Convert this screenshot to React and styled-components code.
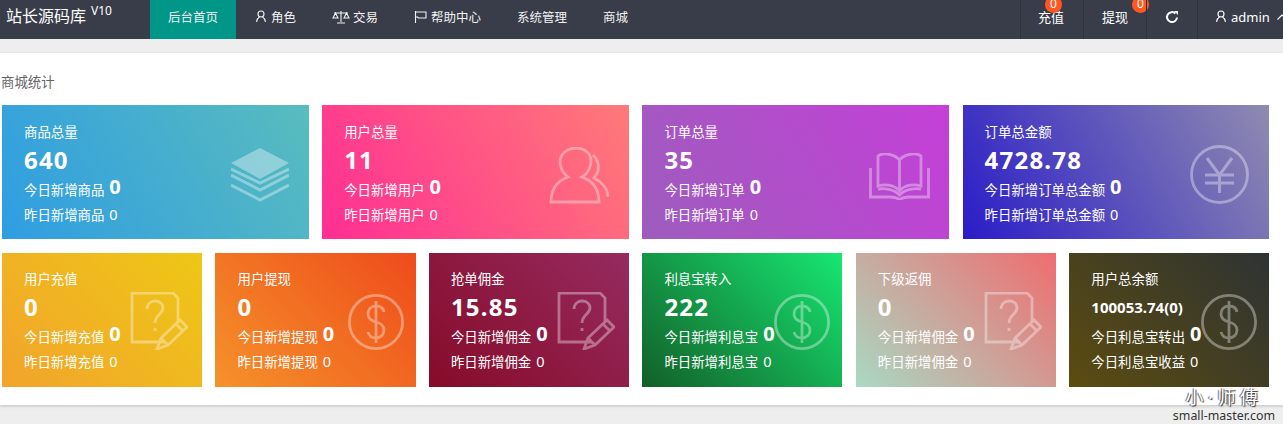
import React from 'react';
import styled, { createGlobalStyle } from 'styled-components';

const GlobalStyle = createGlobalStyle`
  html, body {
    margin: 0;
    height: 100%;
    overflow: hidden;
    background: #eeeeee;
    font-family: "Noto Sans", "Noto Sans CJK SC", sans-serif;
  }
  * { box-sizing: border-box; }
`;

// Top bar
const Header = styled.header`
  display: flex;
  height: 39px;
  background: #393d49;
  color: #fff;
  overflow: hidden;
`;

const Brand = styled.div`
  flex: none;
  width: 150px;
  padding-left: 6px;
  font-size: 16px;
  line-height: 32px;
  white-space: nowrap;
  sup {
    font-size: 12px;
    line-height: 12px;
    margin-left: 5px;
    vertical-align: 7px;
  }
`;

const Nav = styled.nav`
  display: flex;
  flex: 1;
`;

const NavItem = styled.a`
  display: flex;
  align-items: center;
  gap: ${(p) => p.$gap || 4}px;
  margin-right: ${(p) => (p.$active ? 1 : 0)}px;
  padding: 0 18px 6px;
  font-size: 12.5px;
  color: #f2f2f2;
  background: ${(p) => (p.$active ? '#009688' : 'transparent')};
  white-space: nowrap;
`;

const HeaderRight = styled.div`
  display: flex;
  flex: none;
  width: 263px;
  overflow: hidden;
`;

const RightItem = styled.div`
  position: relative;
  display: flex;
  flex: none;
  align-items: center;
  gap: 4px;
  width: ${(p) => p.$w}px;
  padding: 0 0 6px ${(p) => p.$pl}px;
  border-left: 1px solid #2f333e;
  font-size: 13px;
  color: #fff;
  white-space: nowrap;
  svg {
    flex: none;
  }
`;

const Badge = styled.span`
  position: absolute;
  top: -4px;
  left: ${(p) => p.$left}px;
  width: 17px;
  height: 17px;
  border-radius: 50%;
  background: #ff5722;
  font-size: 12px;
  line-height: 15px;
  text-align: center;
`;

const Gap = styled.div`
  height: 14px;
`;

// Main panel
const Panel = styled.main`
  height: 352px;
  background: #fff;
  box-shadow: 0 1px 3px rgba(0, 0, 0, 0.2);
  padding-top: 19px;
`;

const PanelTitle = styled.div`
  height: 33px;
  padding-left: 1px;
  font-size: 13.4px;
  line-height: 20px;
  color: #666;
`;

const CardRow = styled.div`
  display: grid;
  grid-template-columns: repeat(${(p) => p.$cols}, 1fr);
  gap: 13.4px;
  margin: 0 13.6px 14px 2px;
`;

const Card = styled.div`
  position: relative;
  height: 134px;
  padding: ${(p) => p.$pt}px 0 0 22px;
  color: #fff;
  background: linear-gradient(${(p) => p.$angle}deg, ${(p) => p.$from}, ${(p) => p.$to});
  overflow: hidden;
`;

const CardTitle = styled.div`
  font-size: 13.4px;
  line-height: 20px;
  white-space: nowrap;
`;

const CardValue = styled.div`
  margin-top: 2px;
  font-size: ${(p) => (p.$small ? 15 : 24)}px;
  font-weight: 700;
  line-height: 32px;
  letter-spacing: ${(p) => (p.$small ? 0 : 1.2)}px;
  white-space: nowrap;
`;

const CardLine = styled.div`
  display: flex;
  align-items: center;
  gap: 5px;
  height: 25px;
  font-size: 13.4px;
  white-space: nowrap;
  b {
    font-size: 20px;
    line-height: 20px;
    margin-top: -3px;
  }
  span {
    font-size: 14.5px;
  }
`;

const CardIcon = styled.svg`
  position: absolute;
  top: ${(p) => p.$top}px;
  right: ${(p) => p.$right}px;
  fill: none;
  stroke: #fff;
  stroke-width: 2.8;
  opacity: 0.36;
`;

const Watermark = styled.div`
  position: absolute;
  top: 386px;
  left: 1172px;
  width: 104px;
  text-align: center;
  color: #333;
  font-size: 12.4px;
  line-height: 16px;
  white-space: nowrap;
`;

const WatermarkName = styled.div`
  font-size: 18px;
  line-height: 22px;
  letter-spacing: 4.5px;
  color: #fff;
  text-shadow: 1px 1px 1px #333, -1px 0 1px #555;
`;

const ChevronSvg = styled.svg`
  margin-left: 3px;
  fill: none;
  stroke: currentColor;
  stroke-width: 1.1;
`;

const UserGlyph = () => (
  <svg width="12" height="13" viewBox="0 0 12 13" fill="none" stroke="currentColor" strokeWidth="1.1">
    <circle cx="6" cy="4" r="3" />
    <path d="M4.5 7C2.6 8 1.8 9.8 1.6 12M7.5 7C9.4 8 10.2 9.8 10.4 12" />
  </svg>
);

const ScaleGlyph = () => (
  <svg width="18" height="14" viewBox="0 0 18 14" fill="none" stroke="currentColor" strokeWidth="1.1">
    <path d="M9 1V12M5 13H13M2 3H16" />
    <path d="M1 8L3.5 3L6 8ZM12 8L14.5 3L17 8Z" />
  </svg>
);

const FlagGlyph = () => (
  <svg width="13" height="14" viewBox="0 0 13 14" fill="none" stroke="currentColor" strokeWidth="1.1">
    <path d="M1.5 1V13M1.5 2H12V8H4.5L3.5 7H1.5" />
  </svg>
);

const RefreshGlyph = () => (
  <svg width="14" height="14" viewBox="0 0 14 14" fill="none" stroke="currentColor" strokeWidth="2">
    <path d="M12 7.5A5 5 0 1 1 10.4 3.4" />
    <path d="M9 1L13 1L13 5Z" fill="currentColor" stroke="none" />
  </svg>
);

const ChevronGlyph = () => (
  <ChevronSvg width="10" height="6" viewBox="0 0 10 6">
    <path d="M0.5 5.5L5 1L9.5 5.5" />
  </ChevronSvg>
);

const LayersIcon = (props) => (
  <CardIcon width="58" height="54" viewBox="0 0 58 54" {...props}>
    <path d="M29 0L58 15L29 31L0 15Z" fill="#fff" stroke="none" />
    <path d="M0 27L29 42L58 27M0 37L29 52L58 37" strokeWidth="3" />
    <path d="M0 22L29 36L58 22" strokeWidth="3" transform="translate(0 -1)" />
  </CardIcon>
);

const UsersIcon = (props) => (
  <CardIcon width="60" height="57" viewBox="0 0 60 57" {...props}>
    <path d="M2 55H50C50 42 44 34 33 30C40 26 42 18 42 14C42 6 35 1 27 1C18 1 11 7 11 15C11 21 14 26 19 30C8 34 2 43 2 55Z" />
    <path d="M44 8C49 12 50 19 49 24C48 27 46 29 45 31C53 35 59 42 59 50" />
  </CardIcon>
);

const BookIcon = (props) => (
  <CardIcon width="61" height="47" viewBox="0 0 61 47" {...props}>
    <path d="M30.5 38V7C26 1 14 -1 9 3V33C14 31 25 31 30.5 38C36 31 47 31 52 33V3C47 -1 35 1 30.5 7" />
    <path d="M1.5 15V44H21C25 44 28 44 30.5 47C33 44 36 44 40 44H59.5V15" />
    <path d="M9 36C15 35 25 36 30.5 42C36 36 46 35 52 36" />
  </CardIcon>
);

const YenIcon = (props) => (
  <CardIcon width="59" height="59" viewBox="0 0 59 59" {...props}>
    <circle cx="29.5" cy="29.5" r="28" />
    <path d="M17 13L29.5 30L42 13M29.5 30V48M15 30H44M15 38H44" strokeWidth="3" />
  </CardIcon>
);

const DollarIcon = (props) => (
  <CardIcon width="56" height="56" viewBox="0 0 56 56" {...props}>
    <circle cx="28" cy="28" r="26.6" />
    <path d="M36 18C35 13 31 12 28 12C23 12 20 15 20 20C20 25 24 27 28 28C32 29 36 32 36 36C36 41 32 44 28 44C24 44 21 42 20 38M28 7V49" />
  </CardIcon>
);

const NoteIcon = (props) => (
  <CardIcon width="58" height="58" viewBox="0 0 58 58" {...props}>
    <path d="M35 50H2V1H43L48 6V31" />
    <path d="M17 17C17 11 22 9 25 9C30 9 33 12 33 16C33 22 25 23 25 31M25 36V39" />
    <path d="M27 57L31 46L50 28L57 35L38 53Z" />
    <path d="M31 46L38 53M46 32L53 39" />
  </CardIcon>
);

const topCards = [
  { title: '商品总量', value: '640', today: '今日新增商品', yesterday: '昨日新增商品', from: '#2f9de2', to: '#59bcbe', Icon: LayersIcon, top: 43, right: 20 },
  { title: '用户总量', value: '11', today: '今日新增用户', yesterday: '昨日新增用户', from: '#ff2e93', to: '#ff7a78', Icon: UsersIcon, top: 42, right: 20 },
  { title: '订单总量', value: '35', today: '今日新增订单', yesterday: '昨日新增订单', from: '#9d5dbd', to: '#c53fd8', Icon: BookIcon, top: 48, right: 19 },
  { title: '订单总金额', value: '4728.78', today: '今日新增订单总金额', yesterday: '昨日新增订单总金额', from: '#2a1cc8', to: '#8f8bb0', Icon: YenIcon, top: 40, right: 20 },
];

const bottomCards = [
  { title: '用户充值', value: '0', today: '今日新增充值', yesterday: '昨日新增充值', from: '#f2a42c', to: '#eec716', Icon: NoteIcon, top: 39, right: 14 },
  { title: '用户提现', value: '0', today: '今日新增提现', yesterday: '昨日新增提现', from: '#f5922a', to: '#ee4b1b', Icon: DollarIcon, top: 41, right: 12 },
  { title: '抢单佣金', value: '15.85', today: '今日新增佣金', yesterday: '昨日新增佣金', from: '#860b28', to: '#962b60', Icon: NoteIcon, top: 39, right: 14 },
  { title: '利息宝转入', value: '222', today: '今日新增利息宝', yesterday: '昨日新增利息宝', from: '#125f28', to: '#17e772', Icon: DollarIcon, top: 41, right: 12 },
  { title: '下级返佣', value: '0', today: '今日新增佣金', yesterday: '昨日新增佣金', from: '#a9d9c3', to: '#ef6d70', Icon: NoteIcon, top: 39, right: 14 },
  { title: '用户总余额', value: '100053.74(0)', small: true, today: '今日利息宝转出', yesterday: '今日利息宝收益', from: '#5c4c10', to: '#2e3333', Icon: DollarIcon, top: 41, right: 12 },
];

const StatCard = ({ card, pt, angle }) => {
  const { Icon } = card;
  return (
    <Card $from={card.from} $to={card.to} $pt={pt} $angle={angle}>
      <CardTitle>{card.title}</CardTitle>
      <CardValue $small={card.small}>{card.value}</CardValue>
      <CardLine>
        {card.today}<b>0</b>
      </CardLine>
      <CardLine>
        {card.yesterday}<span>0</span>
      </CardLine>
      <Icon $top={card.top} $right={card.right} />
    </Card>
  );
};

export default function App() {
  return (
    <>
      <GlobalStyle />
      <Header>
        <Brand>
          站长源码库<sup>V10</sup>
        </Brand>
        <Nav>
          <NavItem $active>后台首页</NavItem>
          <NavItem><UserGlyph />角色</NavItem>
          <NavItem $gap={3}><ScaleGlyph />交易</NavItem>
          <NavItem><FlagGlyph />帮助中心</NavItem>
          <NavItem>系统管理</NavItem>
          <NavItem>商城</NavItem>
        </Nav>
        <HeaderRight>
          <RightItem $w={63} $pl={17}>
            充值<Badge $left={24}>0</Badge>
          </RightItem>
          <RightItem $w={63} $pl={18}>
            提现<Badge $left={48}>0</Badge>
          </RightItem>
          <RightItem $w={51} $pl={18}><RefreshGlyph /></RightItem>
          <RightItem $w={86} $pl={17}>
            <UserGlyph />admin<ChevronGlyph />
          </RightItem>
        </HeaderRight>
      </Header>
      <Gap />
      <Panel>
        <PanelTitle>商城统计</PanelTitle>
        <CardRow $cols={4}>
          {topCards.map((card) => <StatCard key={card.title} card={card} pt={17} angle={60} />)}
        </CardRow>
        <CardRow $cols={6}>
          {bottomCards.map((card) => <StatCard key={card.title} card={card} pt={16} angle={45} />)}
        </CardRow>
      </Panel>
      <Watermark>
        <WatermarkName>小·师傅</WatermarkName>
        small-master.com
      </Watermark>
    </>
  );
}
